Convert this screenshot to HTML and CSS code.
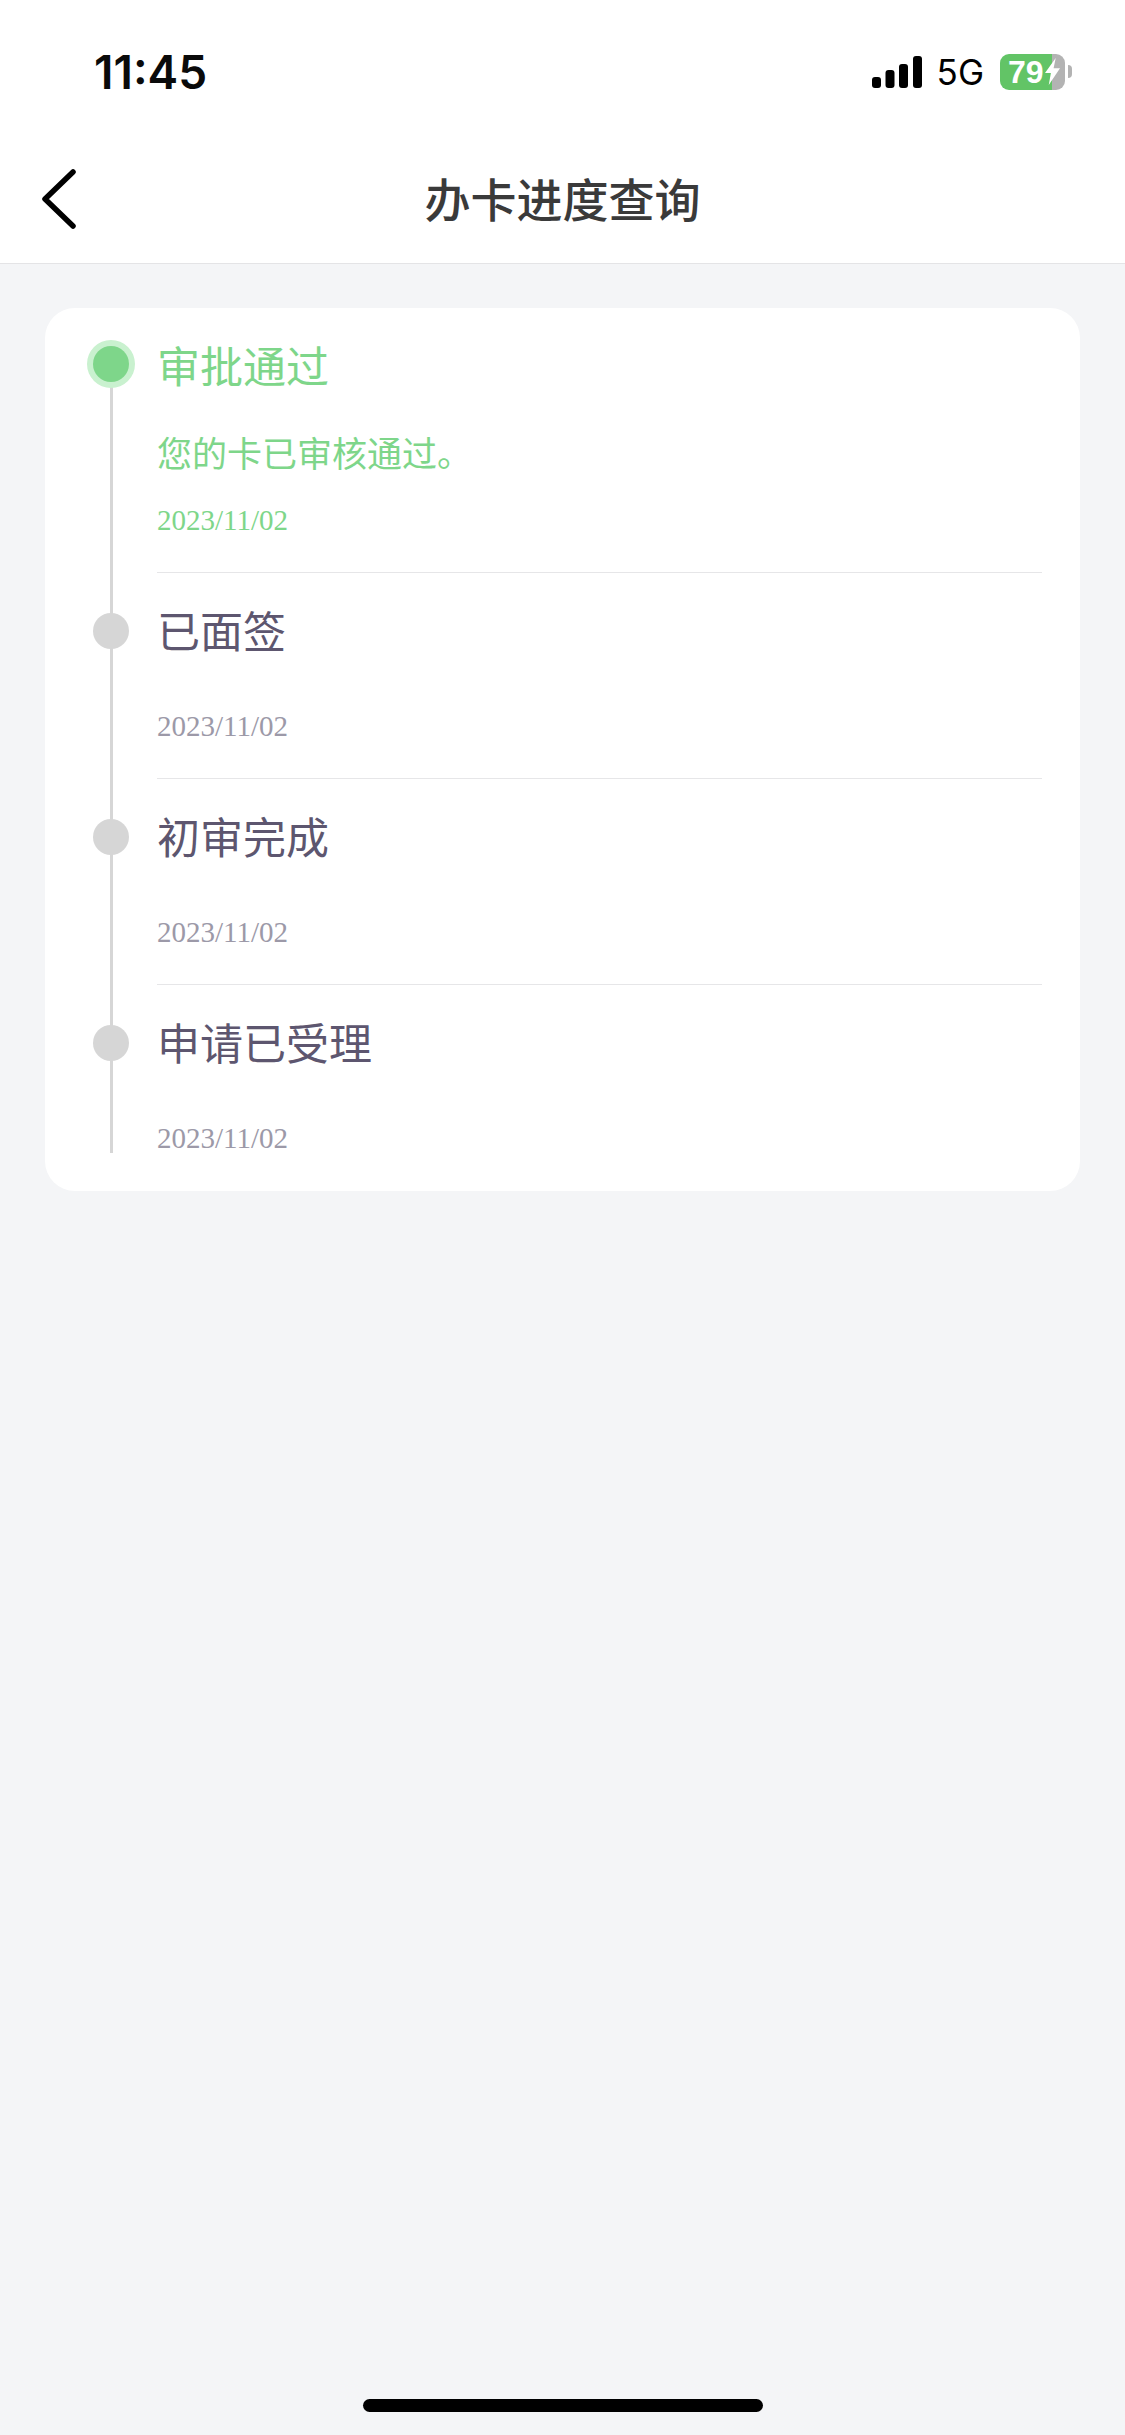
FILE: index.html
```html
<!DOCTYPE html>
<html lang="zh-CN">

<head>
      <meta charset="UTF-8">
      <meta name="viewport" content="width=device-width, initial-scale=1.0">
      <title>办卡进度查询</title>
      <link rel="stylesheet" href="styles.css">
</head>

<body>
      <div id="main">
            <div class="status-bar">
                  <span class="time">11:45</span>
                  <div class="status-icons">
                        <svg class="signal" width="50" height="32" viewBox="0 0 50 32">
                              <rect x="0" y="21" width="9" height="11" rx="3"/>
                              <rect x="13.500" y="14" width="9" height="18" rx="3"/>
                              <rect x="27" y="8" width="9" height="24" rx="3"/>
                              <rect x="41" y="0" width="9" height="32" rx="3"/>
                        </svg>
                        <span class="network">5G</span>
                        <div class="battery">
                              <div class="battery-body">
                                    <span class="battery-level">79</span>
                                    <svg class="bolt" width="15" height="27" viewBox="0 0 14 25">
                                          <path d="M10 0 L0 14 H5.500 L3.500 25 L14 9.500 H8 Z"/>
                                    </svg>
                              </div>
                              <div class="battery-cap"></div>
                        </div>
                  </div>
            </div>

            <div class="nav-bar">
                  <svg class="back" width="36" height="60" viewBox="0 0 36 60">
                        <path d="M32 3 L4 30 L32 57"/>
                  </svg>
                  <h1>办卡进度查询</h1>
            </div>

            <div class="card">
                  <ul class="timeline">
                        <li class="step active">
                              <div class="rail"><span class="dot"></span></div>
                              <div class="step-body">
                                    <h2>审批通过</h2>
                                    <p class="desc">您的卡已审核通过。</p>
                                    <p class="date">2023/11/02</p>
                              </div>
                        </li>
                        <li class="step">
                              <div class="rail"><span class="dot"></span></div>
                              <div class="step-body">
                                    <h2>已面签</h2>
                                    <p class="date">2023/11/02</p>
                              </div>
                        </li>
                        <li class="step">
                              <div class="rail"><span class="dot"></span></div>
                              <div class="step-body">
                                    <h2>初审完成</h2>
                                    <p class="date">2023/11/02</p>
                              </div>
                        </li>
                        <li class="step">
                              <div class="rail"><span class="dot"></span></div>
                              <div class="step-body">
                                    <h2>申请已受理</h2>
                                    <p class="date">2023/11/02</p>
                              </div>
                        </li>
                  </ul>
            </div>

            <div class="home-bar"></div>
      </div>
</body>

</html>
```

FILE: styles.css
```css
* {
      box-sizing: border-box;
      font-family: "Noto Sans CJK SC", "Noto Sans", sans-serif;
}

body {
      padding: 0;
      margin: 0;
}

#main {
      display: flex;
      flex-direction: column;
      height: 100vh;
      background-color: #f4f5f7;
}

/* status bar */
.status-bar {
      display: flex;
      justify-content: space-between;
      align-items: center;
      height: 140px;
      padding: 3px 53px 0 94px;
      background-color: #fff;
}

.time {
      font-family: Inter, sans-serif;
      font-size: 46px;
      font-weight: 600;
      color: #0a0a0a;
}

.status-icons {
      display: flex;
      align-items: center;
}

.signal {
      fill: #000;
}

.network {
      margin-left: 15px;
      font-family: Inter, sans-serif;
      font-size: 35px;
      color: #000;
}

.battery {
      display: flex;
      align-items: center;
      margin-left: 16px;
}

.battery-body {
      display: flex;
      align-items: center;
      width: 65px;
      height: 36px;
      padding-left: 8px;
      border-radius: 9px;
      background-image: linear-gradient(to right, #62c466 0, #62c466 52px, #b3b3b3 52px);
}

.battery-level {
      font-family: "Liberation Sans", sans-serif;
      font-size: 32px;
      font-weight: 700;
      line-height: 36px;
      color: #fff;
}

.bolt {
      margin-left: 1px;
      flex-shrink: 0;
      fill: #fff;
}

.battery-cap {
      width: 4px;
      height: 13px;
      margin-left: 3px;
      border-radius: 0 4px 4px 0;
      background-color: #b3b3b3;
}

/* nav bar */
.nav-bar {
      display: flex;
      justify-content: center;
      align-items: center;
      position: relative;
      height: 124px;
      padding-bottom: 10px;
      background-color: #fff;
      border-bottom: 1px solid #e4e4e6;
}

.nav-bar h1 {
      margin: 0;
      font-size: 46px;
      font-weight: 500;
      color: #3a3a3a;
}

.back {
      position: absolute;
      left: 41px;
      top: 29px;
      fill: none;
      stroke: #000;
      stroke-width: 5.500px;
      stroke-linecap: round;
      stroke-linejoin: round;
}

/* progress card */
.card {
      margin: 44px 45px 0;
      padding: 0 38px 36px 41px;
      border-radius: 30px;
      background-color: #fff;
}

.timeline {
      position: relative;
      margin: 0;
      padding: 0;
      list-style: none;
}

/* line behind the dots */
.timeline::before {
      content: "";
      position: absolute;
      left: 24px;
      top: 56px;
      bottom: 2px;
      width: 3px;
      background-color: #d6d6d6;
}

.step {
      display: flex;
}

.rail {
      position: relative;
      display: flex;
      justify-content: center;
      width: 47px;
      margin: 0 22.500px 0 1.500px;
      padding-top: 40px;
}

.dot {
      width: 36px;
      height: 36px;
      border-radius: 50%;
      background-color: #d6d6d6;
}

.active .dot {
      margin-top: -2px;
      background-color: #7ed68a;
      box-shadow: 0 0 0 6px #c9f1cf;
}

.step-body {
      flex: 1;
      padding: 34px 0 35px;
      border-bottom: 1px solid #e6e6e8;
}

.step:last-child .step-body {
      padding-bottom: 0;
      border-bottom: none;
}

.step-body h2 {
      margin: 0 0 58px;
      font-size: 43px;
      font-weight: 400;
      line-height: 44px;
      color: #5d566f;
}

.active .step-body h2 {
      margin-bottom: 41px;
      color: #7ed68a;
}

.desc {
      margin: 0 0 26px;
      font-size: 35px;
      line-height: 50px;
      color: #7ed68a;
}

.date {
      margin: 0;
      font-family: "Liberation Serif", serif;
      font-size: 29px;
      line-height: 34px;
      color: #9c99a8;
}

.active .date {
      color: #7ed68a;
}

.home-bar {
      width: 400px;
      height: 13px;
      margin: auto auto 23px;
      border-radius: 7px;
      background-color: #000;
}
```
